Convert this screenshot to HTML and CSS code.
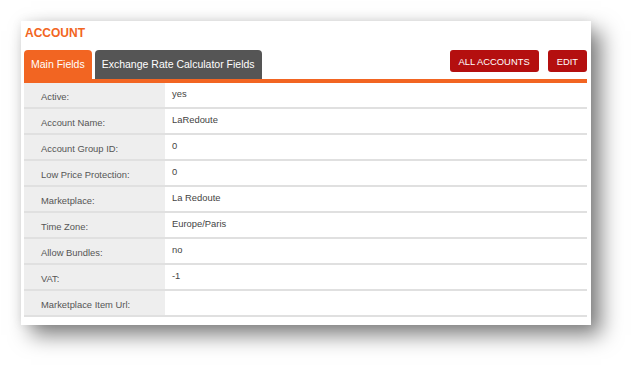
FILE: index.html
```html
<!DOCTYPE html>
<html lang="en">
<head>
    <title>Account</title>
    <link rel="stylesheet" href="styles.css">
</head>
<body>
    <div class="card">
        <p class="title">ACCOUNT</p>

        <div class="tab-bar">
            <div class="tabs">
                <div class="tab active">Main Fields</div>
                <div class="tab">Exchange Rate Calculator Fields</div>
            </div>
            <div class="actions">
                <button class="red-button">ALL ACCOUNTS</button>
                <button class="red-button">EDIT</button>
            </div>
        </div>
        <div class="orange-line"></div>

        <table class="fields">
            <tr><td class="label">Active:</td><td class="value">yes</td></tr>
            <tr><td class="label">Account Name:</td><td class="value">LaRedoute</td></tr>
            <tr><td class="label">Account Group ID:</td><td class="value">0</td></tr>
            <tr><td class="label">Low Price Protection:</td><td class="value">0</td></tr>
            <tr><td class="label">Marketplace:</td><td class="value">La Redoute</td></tr>
            <tr><td class="label">Time Zone:</td><td class="value">Europe/Paris</td></tr>
            <tr><td class="label">Allow Bundles:</td><td class="value">no</td></tr>
            <tr><td class="label">VAT:</td><td class="value">-1</td></tr>
            <tr><td class="label">Marketplace Item Url:</td><td class="value"></td></tr>
        </table>
    </div>
</body>
</html>
```

FILE: styles.css
```css
p{
    margin: 0;
}
body{
    margin: 0;
    padding: 21px 0 0 21px;
    min-height: 367px;
    box-sizing: border-box;
    background-color: white;
    font-family: "Liberation Sans", Arial, Helvetica, sans-serif;
}
.card{
    width: 563px;
    padding: 5px 4px 8px 3px;
    background-color: white;
    box-shadow: 10px 10px 20px rgba(0, 0, 0, 0.5), 0 0 10px rgba(0, 0, 0, 0.08);
}
.title{
    color: #f26522;
    font-size: 12px;
    font-weight: bold;
    line-height: 14px;
    padding-left: 1px;
    margin-bottom: 10px;
}
.tab-bar{
    display: flex;
    justify-content: space-between;
    align-items: flex-start;
    height: 29px;
}
.tabs{
    display: flex;
    column-gap: 3px;
}
.tab{
    height: 29px;
    line-height: 29px;
    padding: 0 7px;
    font-size: 10.5px;
    color: white;
    background-color: #555555;
    border-radius: 4px 4px 0 0;
}
.tab.active{
    background-color: #f26522;
}
.actions{
    display: flex;
    column-gap: 9px;
}
.red-button{
    height: 22px;
    padding: 0 9px;
    border: none;
    border-radius: 3px;
    background-color: #b40f0f;
    color: white;
    font-family: "Liberation Sans", Arial, sans-serif;
    font-size: 9.4px;
}
.orange-line{
    height: 4px;
    background-color: #f26522;
}
.fields{
    width: 100%;
    border-collapse: collapse;
    font-size: 9.4px;
}
.fields td{
    height: 21px;
    padding: 0;
    border-bottom: 2px solid #e0e0e0;
}
.label{
    width: 124px;
    background-color: #eeeeee;
    color: #555555;
    padding-left: 17px !important;
    padding-top: 3px !important;
}
.value{
    color: #444444;
    padding-left: 7px !important;
    padding-bottom: 3px !important;
}
```
